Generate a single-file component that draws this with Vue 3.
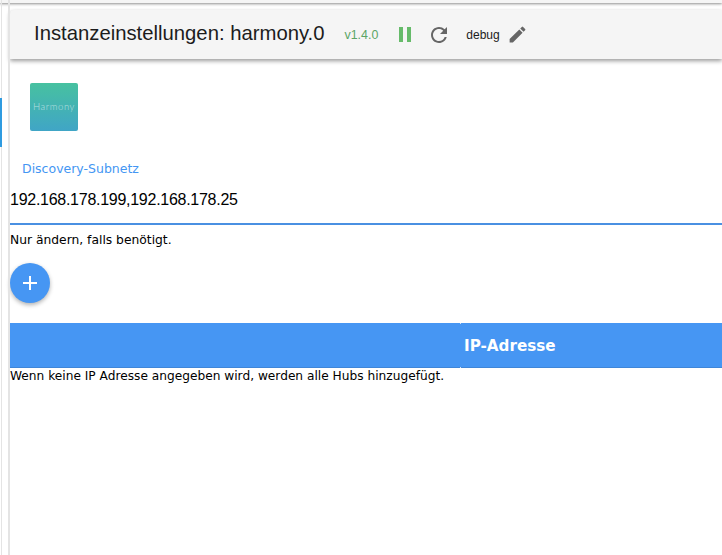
<script setup>
const title = 'Instanzeinstellungen: harmony.0'
</script>

<template>
  <div class="page">
    <aside class="rail"><span class="rail-mark"></span></aside>
    <main class="panel">
      <header class="toolbar">
        <h1 class="title">{{ title }}</h1>
        <span class="version">v1.4.0</span>
        <svg class="pause" width="12" height="15" viewBox="0 0 12 15"><rect x="0" y="0" width="4" height="15" fill="#66bb6a"/><rect x="8" y="0" width="4" height="15" fill="#66bb6a"/></svg>
        <svg class="reload" width="24" height="24" viewBox="0 0 24 24"><path fill="#666" d="M17.65 6.35A7.958 7.958 0 0 0 12 4c-4.42 0-7.99 3.58-7.99 8s3.57 8 7.99 8c3.73 0 6.84-2.55 7.73-6h-2.08A5.99 5.99 0 0 1 12 18c-3.31 0-6-2.69-6-6s2.69-6 6-6c1.66 0 3.14.69 4.22 1.78L13 11h7V4l-2.35 2.35z"/></svg>
        <span class="level">debug</span>
        <svg class="pencil" width="21" height="21" viewBox="0 0 24 24"><path fill="#666" d="M3 17.25V21h3.75L17.81 9.94l-3.75-3.75L3 17.25zM20.71 7.04a1 1 0 0 0 0-1.41l-2.34-2.34a1 1 0 0 0-1.41 0l-1.83 1.83 3.75 3.75 1.83-1.83z"/></svg>
      </header>

      <div class="logo"><span>Harmony</span></div>

      <label class="field-label">Discovery-Subnetz</label>
      <div class="field-value">192.168.178.199,192.168.178.25</div>
      <p class="hint">Nur ändern, falls benötigt.</p>

      <button class="fab" type="button" aria-label="Hinzufügen">
        <svg width="24" height="24" viewBox="0 0 24 24"><path fill="#fff" d="M19 13h-6v6h-2v-6H5v-2h6V5h2v6h6v2z"/></svg>
      </button>

      <div class="table-head">
        <div class="cell"></div>
        <div class="cell cell-ip">IP-Adresse</div>
      </div>
      <p class="note">Wenn keine IP Adresse angegeben wird, werden alle Hubs hinzugefügt.</p>
    </main>
  </div>
</template>

<style>
html, body { margin: 0; background: #fff; overflow: hidden; }
</style>

<style scoped>
.page {
  position: relative;
  display: flex;
  width: 722px;
  height: 555px;
  overflow: hidden;
  background: #fff;
  font-family: "DejaVu Sans", sans-serif;
  color: #000;
}
.page::before {
  content: "";
  position: absolute;
  left: 0;
  right: 0;
  top: -4px;
  height: 7px;
  background: #f5f5f5;
  box-shadow: 0 1px 3px rgba(0, 0, 0, .45);
}
.rail {
  position: relative;
  flex: none;
  width: 8px;
  border-right: 2px solid #e4e4e4;
  box-sizing: content-box;
}
.rail::before {
  content: "";
  position: absolute;
  left: 1px;
  top: 0;
  bottom: 0;
  width: 1px;
  background: #e4e4e4;
}
.rail-mark {
  position: absolute;
  left: 0;
  top: 98px;
  width: 2px;
  height: 49px;
  background: #2f9be0;
}
.panel {
  flex: 1;
  min-width: 0;
  display: flex;
  flex-direction: column;
  align-items: flex-start;
}
.toolbar {
  box-sizing: border-box;
  width: 100%;
  height: 49px;
  margin-top: 10px;
  display: flex;
  align-items: center;
  padding: 0 0 0 24px;
  background: #f5f5f5;
  border-top-left-radius: 4px;
  box-shadow: 0 2px 4px rgba(0, 0, 0, .4);
}
.title {
  margin: 0 0 3px;
  font: 400 20.3px "Liberation Sans", sans-serif;
  color: #1c1c1c;
}
.version {
  margin-left: 20px;
  font: 12.4px "Liberation Sans", sans-serif;
  color: #5ba565;
}
.pause { margin-left: 21px; }
.reload { margin-left: 16px; }
.level {
  margin-left: 15px;
  font: 12px "Liberation Sans", sans-serif;
  color: #1c1c1c;
}
.pencil { margin-left: 7px; }
.logo {
  width: 48px;
  height: 48px;
  margin: 24px 0 0 20px;
  border-radius: 2px;
  background: linear-gradient(#47c1a0, #40a5c6);
  display: flex;
  align-items: center;
  justify-content: center;
}
.logo span {
  margin-bottom: 2px;
  font: 300 9.5px Lato, sans-serif;
  letter-spacing: .6px;
  color: rgba(255, 255, 255, .6);
}
.field-label {
  margin: 30px 0 0 12px;
  font-size: 12.5px;
  line-height: 16px;
  color: #4496f3;
}
.field-value {
  box-sizing: border-box;
  width: 100%;
  height: 48px;
  padding-top: 12px;
  font: 16px/22px "Liberation Sans", sans-serif;
  letter-spacing: -.27px;
  border-bottom: 2px solid #4a90e2;
}
.hint {
  margin: 7px 0 0;
  font-size: 12.3px;
  line-height: 16px;
}
.fab {
  width: 40px;
  height: 40px;
  margin-top: 15px;
  padding: 0;
  border: 0;
  border-radius: 50%;
  background: #4696f3;
  box-shadow: 0 2px 4px rgba(0, 0, 0, .3);
  display: flex;
  align-items: center;
  justify-content: center;
}
.table-head {
  width: 100%;
  height: 45px;
  margin-top: 20px;
  display: grid;
  grid-template-columns: 450px 1fr;
  background: #4696f3;
  border-bottom: 1px solid #3f86d8;
  box-sizing: border-box;
}
.cell-ip {
  position: relative;
  display: flex;
  align-items: center;
  padding: 2px 0 0 4px;
  box-sizing: border-box;
  font-size: 15.2px;
  font-weight: 700;
  color: #fff;
}
.cell-ip::before,
.cell-ip::after {
  content: "";
  position: absolute;
  left: 0;
  width: 1px;
  height: 1px;
  background: #cfe2f9;
}
.cell-ip::before { top: 0; }
.cell-ip::after { bottom: -1px; }
.note {
  margin: 0;
  font-size: 12.2px;
  line-height: 16px;
}
</style>
